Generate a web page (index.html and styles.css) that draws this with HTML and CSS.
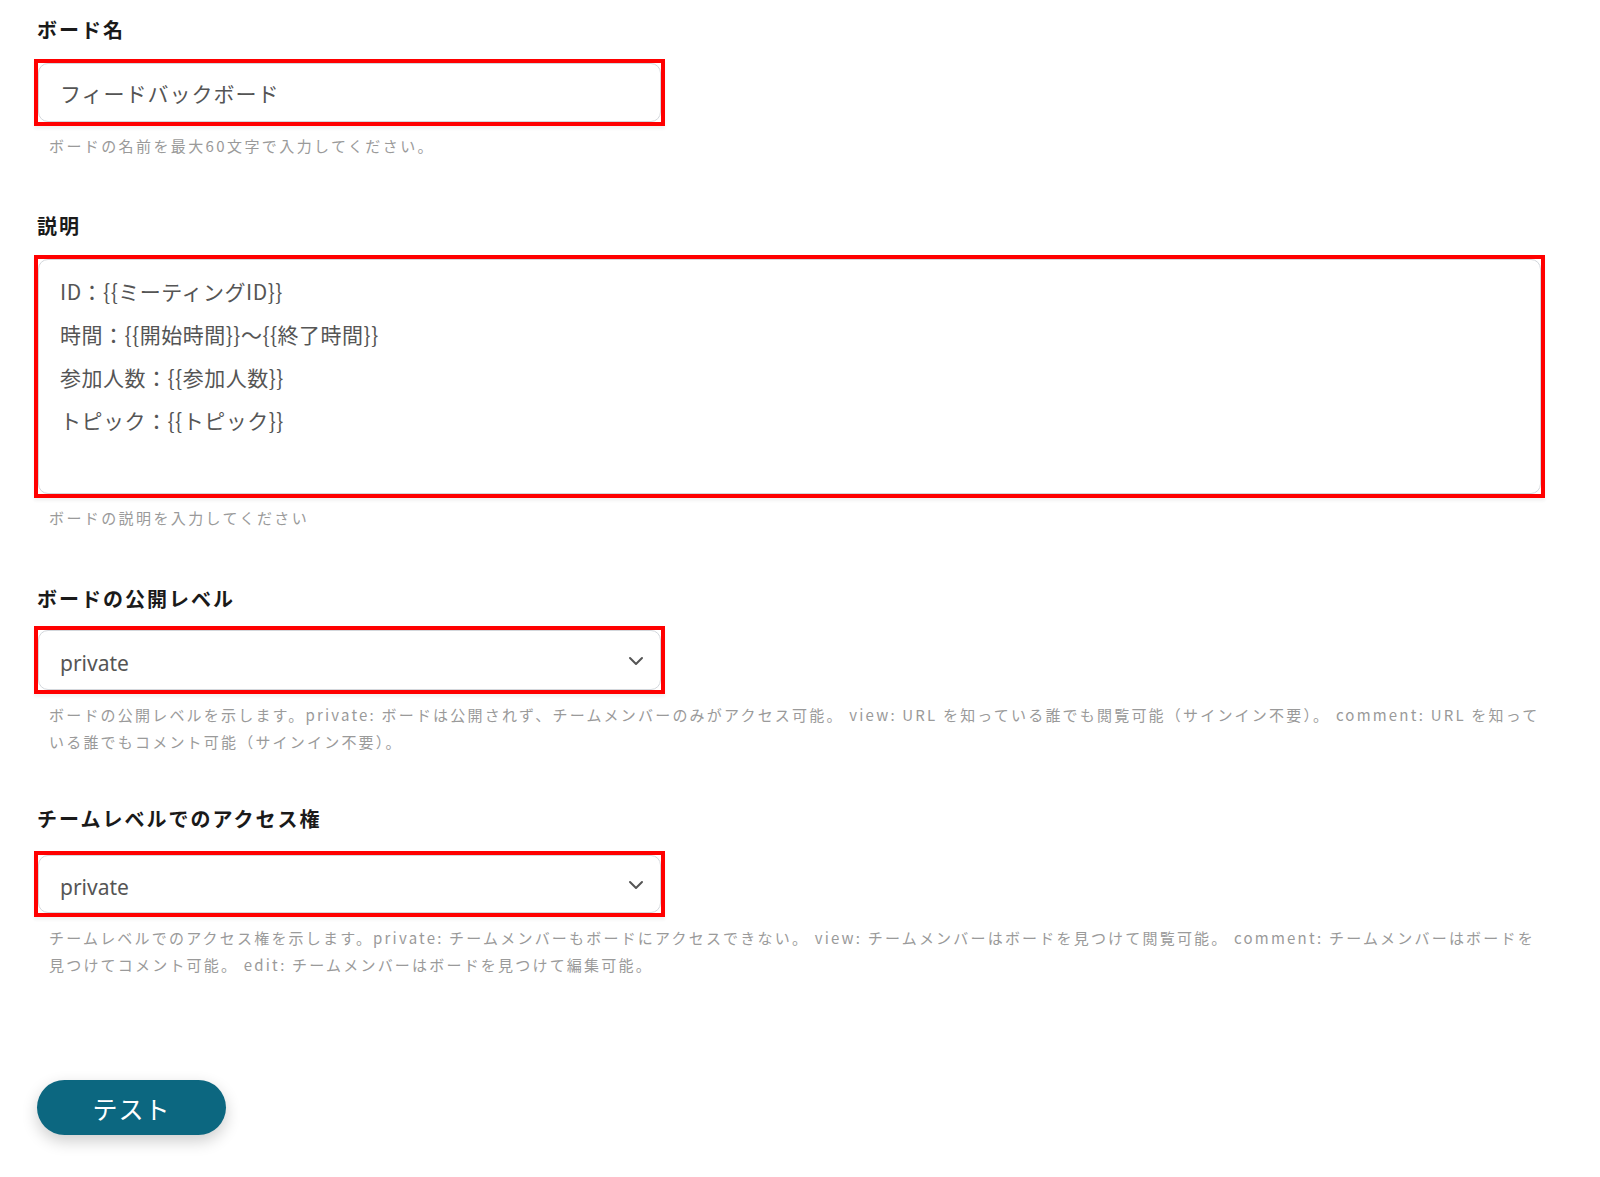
FILE: index.html
```html
<!DOCTYPE html>
<html lang="ja">
<head>
<meta charset="utf-8">
<link rel="stylesheet" href="styles.css">
</head>
<body>
<div class="form">
  <div class="field f1">
    <div class="label">ボード名</div>
    <div class="hl"><div class="control input">フィードバックボード</div></div>
    <div class="help">ボードの名前を最大60文字で入力してください。</div>
  </div>
  <div class="field f2">
    <div class="label">説明</div>
    <div class="hl tall"><div class="control area">
      <div>ID：{{ミーティングID}}</div>
      <div>時間：{{開始時間}}〜{{終了時間}}</div>
      <div>参加人数：{{参加人数}}</div>
      <div>トピック：{{トピック}}</div>
    </div></div>
    <div class="help">ボードの説明を入力してください</div>
  </div>
  <div class="field f3">
    <div class="label">ボードの公開レベル</div>
    <div class="hl"><div class="control select"><span>private</span>
      <svg class="chev" width="16" height="10" viewBox="0 0 16 10"><path d="M2 2l6 6 6-6" fill="none" stroke="#555" stroke-width="2" stroke-linecap="round" stroke-linejoin="round"/></svg></div></div>
    <div class="help multi">ボードの公開レベルを示します。private: ボードは公開されず、チームメンバーのみがアクセス可能。 view: URL を知っている誰でも閲覧可能（サインイン不要）。 comment: URL を知って<br>いる誰でもコメント可能（サインイン不要）。</div>
  </div>
  <div class="field f4">
    <div class="label">チームレベルでのアクセス権</div>
    <div class="hl"><div class="control select"><span>private</span>
      <svg class="chev" width="16" height="10" viewBox="0 0 16 10"><path d="M2 2l6 6 6-6" fill="none" stroke="#555" stroke-width="2" stroke-linecap="round" stroke-linejoin="round"/></svg></div></div>
    <div class="help multi">チームレベルでのアクセス権を示します。private: チームメンバーもボードにアクセスできない。 view: チームメンバーはボードを見つけて閲覧可能。 comment: チームメンバーはボードを<br>見つけてコメント可能。 edit: チームメンバーはボードを見つけて編集可能。</div>
  </div>
  <button class="btn">テスト</button>
</div>
</body>
</html>
```

FILE: styles.css
```css
* { box-sizing: border-box; }
html, body { margin: 0; background: #fff; }
body {
  font-family: "Noto Sans CJK JP", "Noto Sans", sans-serif;
  color: #222;
}
.form {
  padding: 16px 0 40px 34px;
  width: 1545px;
  display: flex;
  flex-direction: column;
  align-items: flex-start;
}
.field { width: 100%; display: flex; flex-direction: column; }
.f2 { margin-top: 53px; }
.f3 { margin-top: 54px; }
.f4 { margin-top: 50px; }
.label {
  font-size: 20px;
  font-weight: 700;
  line-height: 28px;
  letter-spacing: 2px;
  padding-left: 3px;
  color: #1a1a1a;
}
.hl {
  border: 4px solid #ff0000;
  margin-top: 15px;
  width: 631px;
  height: 67px;
  box-shadow: 0 3px 3px rgba(0,0,0,0.05);
}
.f1 .hl { margin-top: 15px; }
.f3 .hl { margin-top: 13px; height: 68px; }
.f4 .hl { margin-top: 18px; height: 66px; }
.hl.tall { width: 1511px; height: 243px; }
.control {
  height: 100%;
  border: 1px solid #d3d7dc;
  border-radius: 10px;
  background: #fff;
  color: #555;
  font-size: 21px;
  letter-spacing: 1px;
  padding-left: 21px;
}
.input, .select { display: flex; align-items: center; }
.select { justify-content: space-between; padding-right: 16px; padding-top: 5px; letter-spacing: 0; }
.select span { font-family: "Noto Sans", "Noto Sans CJK JP", sans-serif; font-size: 21px; }
.chev { display: block; margin-top: -3px; }
.area { padding-top: 10px; line-height: 43px; letter-spacing: 0.5px; }
.help {
  margin-top: 7px;
  padding-left: 15px;
  font-size: 15px;
  line-height: 26px;
  letter-spacing: 2.4px;
  color: #9a9a9a;
  white-space: nowrap;
}
.help.multi { line-height: 27px; letter-spacing: 2.2px; }
.btn {
  margin-top: 102px;
  margin-left: 3px;
  width: 189px;
  height: 55px;
  border: none;
  border-radius: 28px;
  background: #0c6780;
  color: #fff;
  font-family: "Noto Sans CJK JP", sans-serif;
  font-size: 25px;
  letter-spacing: 1px;
  box-shadow: 0 6px 16px rgba(0,0,0,0.2);
}
```
